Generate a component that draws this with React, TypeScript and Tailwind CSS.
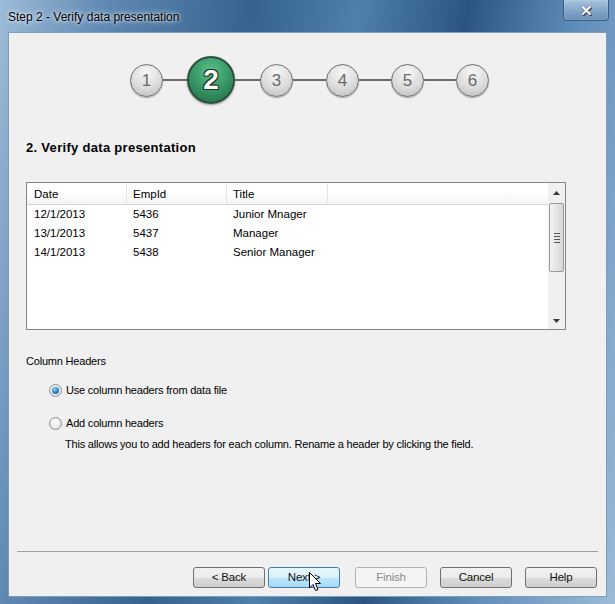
import React from "react";

const font = { fontFamily: '"Liberation Sans", Arial, sans-serif' };

const Step: React.FC<{ n: number; active?: boolean }> = ({ n, active }) =>
  active ? (
    <div className="w-[48px] h-[48px] rounded-full border-[2px] border-[#2d4f3b] bg-[radial-gradient(circle_at_50%_30%,#5fbf8c_0%,#3a9a68_45%,#1f6b44_100%)] flex items-center justify-center shadow-[0_1px_2px_rgba(0,0,0,0.4)]">
      <span className="text-[28px] font-bold text-white leading-none [text-shadow:0_0_1px_#000,1px_1px_0_#1a3a28,-1px_-1px_0_#1a3a28,1px_-1px_0_#1a3a28,-1px_1px_0_#1a3a28]">
        {n}
      </span>
    </div>
  ) : (
    <div className="w-[33px] h-[33px] rounded-full border border-[#6f6f6f] bg-[radial-gradient(circle_at_50%_25%,#f7f7f7_0%,#dcdcdc_55%,#b9b9b9_100%)] flex items-center justify-center shadow-[0_1px_1px_rgba(0,0,0,0.3)]">
      <span className="text-[17px] text-[#6a6a6a] leading-none">{n}</span>
    </div>
  );

const Line: React.FC<{ w: string }> = ({ w }) => (
  <div className={`${w} h-[2px] bg-[#6b6b6b]`} />
);

const Radio: React.FC<{ checked?: boolean }> = ({ checked }) => (
  <div className="w-[13px] h-[13px] rounded-full border border-[#8a8f96] bg-[radial-gradient(circle_at_50%_40%,#ffffff_0%,#e8e8e8_60%,#cfd3d8_100%)] flex items-center justify-center">
    {checked && (
      <div className="w-[7px] h-[7px] rounded-full bg-[radial-gradient(circle_at_40%_35%,#8fd0f5_0%,#2f7fbf_55%,#1b4f80_100%)]" />
    )}
  </div>
);

const Btn: React.FC<{
  label: string;
  variant?: "hover" | "disabled";
  children?: React.ReactNode;
}> = ({ label, variant, children }) => {
  const cls =
    variant === "hover"
      ? "border-[#3c7fb1] bg-[linear-gradient(#eaf6fd_0%,#d9f0fc_50%,#bee6fd_51%,#a7d9f5_100%)] text-[#111]"
      : variant === "disabled"
      ? "border-[#adb2b5] bg-[#f4f4f4] text-[#8b8b8b]"
      : "border-[#707070] bg-[linear-gradient(#f2f2f2_0%,#ebebeb_50%,#dddddd_51%,#cfcfcf_100%)] text-[#111]";
  return (
    <div
      className={`relative w-[72px] h-[21px] rounded-[3px] border flex items-center justify-center text-[11.5px] tracking-[-0.2px] ${cls}`}
    >
      {label}
      {children}
    </div>
  );
};

const Cursor: React.FC = () => (
  <svg
    className="absolute left-[40px] top-[4px]"
    width="13"
    height="20"
    viewBox="0 0 13 20"
  >
    <path
      d="M0.5 0.5 L0.5 16 L4 12.5 L6.5 18.5 L9 17.5 L6.5 11.5 L11.5 11.5 Z"
      fill="#fff"
      stroke="#000"
      strokeWidth="1"
      strokeLinejoin="round"
    />
  </svg>
);

const rows = [
  ["12/1/2013", "5436", "Junior Mnager"],
  ["13/1/2013", "5437", "Manager"],
  ["14/1/2013", "5438", "Senior Manager"],
];

const App: React.FC = () => {
  return (
    <div
      style={font}
      className="w-[615px] h-[604px] flex flex-col overflow-hidden bg-[linear-gradient(100deg,#9dbcd8_0%,#5f89b3_15%,#35628f_35%,#4f7fab_50%,#2a5582_65%,#5d8bb8_80%,#9bbbd8_100%)]"
    >
      {/* title bar */}
      <div className="relative h-[32px] shrink-0 flex items-center pl-[8px]">
        <span className="text-[12px] text-black mt-[2px] [text-shadow:0_0_6px_rgba(255,255,255,0.9),0_0_3px_rgba(255,255,255,0.8)]">
          Step 2 - Verify data presentation
        </span>
        <div className="absolute right-[6px] top-0 w-[46px] h-[21px] rounded-b-[4px] border border-t-0 border-[#3b5d82] bg-[linear-gradient(#a9c4dd_0%,#84a7c9_50%,#6a90b7_100%)] flex items-center justify-center shadow-[inset_0_0_1px_#fff]">
          <span className="text-[15px] font-bold text-white leading-none [text-shadow:0_0_1px_#223,1px_1px_0_#334]">
            ✕
          </span>
        </div>
      </div>

      {/* client area */}
      <div className="mx-[8px] mb-[7px] flex-1 border border-[#7f9db9] bg-[#f0f0f0] flex flex-col text-[11px] tracking-[-0.2px] text-black">
        {/* steps */}
        <div className="flex items-center ml-[121px] mt-[23px] h-[48px] tracking-normal">
          <Step n={1} />
          <Line w="w-[24px]" />
          <Step n={2} active />
          <Line w="w-[25px]" />
          <Step n={3} />
          <Line w="w-[33px]" />
          <Step n={4} />
          <Line w="w-[32px]" />
          <Step n={5} />
          <Line w="w-[32px]" />
          <Step n={6} />
        </div>

        <div className="ml-[17px] mt-[36px] text-[13px] font-bold leading-[16px] tracking-[0.3px]">
          2. Verify data presentation
        </div>

        {/* list view */}
        <div className="ml-[17px] mt-[26px] w-[540px] h-[148px] border border-[#828790] bg-white flex text-[11.5px] tracking-normal">
          <div className="flex-1 flex flex-col">
            <div className="h-[22px] flex border-b border-[#d5d5d5] bg-[linear-gradient(#ffffff_0%,#ffffff_40%,#f3f4f6_100%)]">
              <div className="w-[100px] pl-[7px] pt-[2px] flex items-center border-r border-[#e3e5e8]">
                Date
              </div>
              <div className="w-[100px] pl-[6px] pt-[2px] flex items-center border-r border-[#e3e5e8]">
                EmpId
              </div>
              <div className="w-[101px] pl-[6px] pt-[2px] flex items-center border-r border-[#e3e5e8]">
                Title
              </div>
              <div className="flex-1" />
            </div>
            <div>
              {rows.map((r) => (
                <div key={r[0]} className="h-[19px] flex items-center">
                  <div className="w-[100px] pl-[7px]">{r[0]}</div>
                  <div className="w-[100px] pl-[6px]">{r[1]}</div>
                  <div className="pl-[6px]">{r[2]}</div>
                </div>
              ))}
            </div>
          </div>
          {/* scrollbar */}
          <div className="w-[17px] bg-[#f0f0f0] flex flex-col items-center">
            <div className="h-[20px] flex items-center justify-center">
              <svg width="7" height="4" viewBox="0 0 7 4">
                <path d="M0 4 L3.5 0 L7 4 Z" fill="#3b3b3b" />
              </svg>
            </div>
            <div className="w-[15px] h-[69px] rounded-[2px] border border-[#9a9a9a] bg-[linear-gradient(90deg,#f3f3f3_0%,#e6e6e6_50%,#d6d6d6_100%)] flex flex-col items-center justify-center gap-[2px]">
              <div className="w-[6px] h-[1px] bg-[#555]" />
              <div className="w-[6px] h-[1px] bg-[#555]" />
              <div className="w-[6px] h-[1px] bg-[#555]" />
              <div className="w-[6px] h-[1px] bg-[#555]" />
            </div>
            <div className="flex-1" />
            <div className="h-[17px] flex items-center justify-center">
              <svg width="7" height="4" viewBox="0 0 7 4">
                <path d="M0 0 L7 0 L3.5 4 Z" fill="#3b3b3b" />
              </svg>
            </div>
          </div>
        </div>

        <div className="ml-[17px] mt-[24px] leading-[15px]">Column Headers</div>

        <div className="ml-[40px] mt-[13px] flex items-center gap-[4px] h-[16px]">
          <Radio checked />
          <span>Use column headers from data file</span>
        </div>
        <div className="ml-[40px] mt-[17px] flex items-center gap-[4px] h-[16px]">
          <Radio />
          <span>Add column headers</span>
        </div>
        <div className="ml-[56px] mt-[6px] leading-[15px]">
          This allows you to add headers for each column. Rename a header by
          clicking the field.
        </div>

        {/* footer */}
        <div className="mt-auto mx-[8px] border-t border-[#a0a0a0]" />
        <div className="mt-[15px] mb-[8px] pr-[9px] flex justify-end">
          <div className="flex gap-[3px]">
            <Btn label="< Back" />
            <Btn label="Next >" variant="hover">
              <Cursor />
            </Btn>
          </div>
          <div className="flex gap-[13px] ml-[15px]">
            <Btn label="Finish" variant="disabled" />
            <Btn label="Cancel" />
            <Btn label="Help" />
          </div>
        </div>
      </div>
    </div>
  );
};

export default App;
